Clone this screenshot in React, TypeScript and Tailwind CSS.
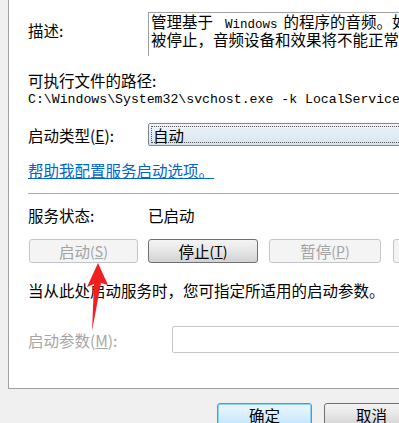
import React from 'react';

const cjk = { fontFamily: '"Noto Sans CJK SC", "Liberation Sans", sans-serif' };
const mono = { fontFamily: '"Liberation Mono", "Noto Sans CJK SC", monospace' };

function WinButton({ label, accel, disabled, width, className = '' }: { label: string; accel?: string; disabled?: boolean; width: number; className?: string }) {
  return (
    <div
      style={{ width }}
      className={`h-[24px] shrink-0 rounded-[3px] border flex items-center justify-center text-[15.5px] leading-[18px] ${
        disabled
          ? 'border-[#c3c6c9] bg-[#f4f4f4] text-[#a3a3a3]'
          : 'border-[#707070] bg-gradient-to-b from-[#f4f4f4] via-[#e6e6e6] to-[#d2d2d2] text-black'
      } ${className}`}
    >
      {label}
      {accel && (
        <span className="text-[14px]">
          (<span className="underline">{accel}</span>)
        </span>
      )}
    </div>
  );
}

export default function App() {
  return (
    <div className="relative w-[399px] h-[423px] overflow-hidden bg-[#f0f0f0] text-black" style={cjk}>
      {/* tab page */}
      <div className="ml-[8px] w-[440px] h-[389px] bg-white border-l border-b border-[#a0a0a0] pl-[19px] text-[15.5px] leading-[18px]">
        <div className="flex pt-[12px] h-[56px]">
          <div className="w-[120px] pt-[9px]">描述:</div>
          <div className="flex-1 border-l border-t border-[#a0a0a0] pl-[2px] pt-[1px] leading-[14px] whitespace-nowrap overflow-hidden">
            <div className="flex items-baseline">
              <span>管理基于</span>
              <span className="ml-[12px] mr-[6px] text-[12.5px]" style={mono}>Windows</span>
              <span>的程序的音频。如果此服务</span>
            </div>
            <div>被停止，音频设备和效果将不能正常工作。</div>
          </div>
        </div>

        <div className="mt-[15px]">可执行文件的路径:</div>
        <div className="mt-[3px] text-[13.2px] leading-[16px] whitespace-nowrap" style={mono}>
          C:\Windows\System32\svchost.exe -k LocalServiceNetworkRestricted
        </div>

        <div className="mt-[15px] flex items-center h-[23px]">
          <div className="w-[120px]">
            启动类型(<span className="underline">E</span>):
          </div>
          <div className="flex-1 h-[23px] rounded-[2px] border border-[#7b8896] bg-gradient-to-b from-[#eef4f9] to-[#d6e4ef] p-[2px]">
            <div className="h-full border border-dotted border-[#555] flex items-center pl-[1px] leading-[16px]">自动</div>
          </div>
        </div>

        <div className="mt-[15px] text-[#0066cc] underline whitespace-nowrap">帮助我配置服务启动选项。</div>

        <div className="mt-[14px] h-px bg-[#a8a8a8]" />

        <div className="mt-[12px] flex">
          <div className="w-[120px]">服务状态:</div>
          <div>已启动</div>
        </div>

        <div className="mt-[15px] flex">
          <WinButton label="启动" accel="S" disabled width={109} className="ml-[1px]" />
          <WinButton label="停止" accel="T" width={110} className="ml-[10px]" />
          <WinButton label="暂停" accel="P" disabled width={112} className="ml-[11px]" />
          <WinButton label="恢复" accel="R" disabled width={110} className="ml-[12px]" />
        </div>

        <div className="mt-[18px] whitespace-nowrap">当从此处启动服务时，您可指定所适用的启动参数。</div>

        <div className="mt-[27px] flex items-center">
          <div className="w-[144px] text-[#a6a6a6]">
            启动参数(<span className="underline">M</span>):
          </div>
          <div className="flex-1 h-[27px] rounded-[2px] border border-[#c5c7cb] bg-white" />
        </div>
      </div>

      {/* dialog buttons */}
      <div className="mt-[14px] flex pl-[217px] gap-[12px] text-[15.5px] leading-[18px]">
        <div className="w-[95px] h-[24px] shrink-0 rounded-[3px] border border-[#3c9ee0] bg-gradient-to-b from-[#eaf6fd] via-[#d9effc] to-[#bee6fd] shadow-[inset_0_0_0_1px_#8fd3f7] flex items-center justify-center">
          确定
        </div>
        <div className="w-[95px] h-[24px] shrink-0 rounded-[3px] border border-[#707070] bg-gradient-to-b from-[#f4f4f4] via-[#e6e6e6] to-[#d2d2d2] flex items-center justify-center">
          取消
        </div>
      </div>

      {/* red annotation arrow */}
      <svg className="absolute left-0 top-0 pointer-events-none" width="399" height="423">
        <polygon
          points="98,263 108,285 101,283 92,331 94,284 87,287"
          fill="#f02020"
        />
      </svg>
    </div>
  );
}
